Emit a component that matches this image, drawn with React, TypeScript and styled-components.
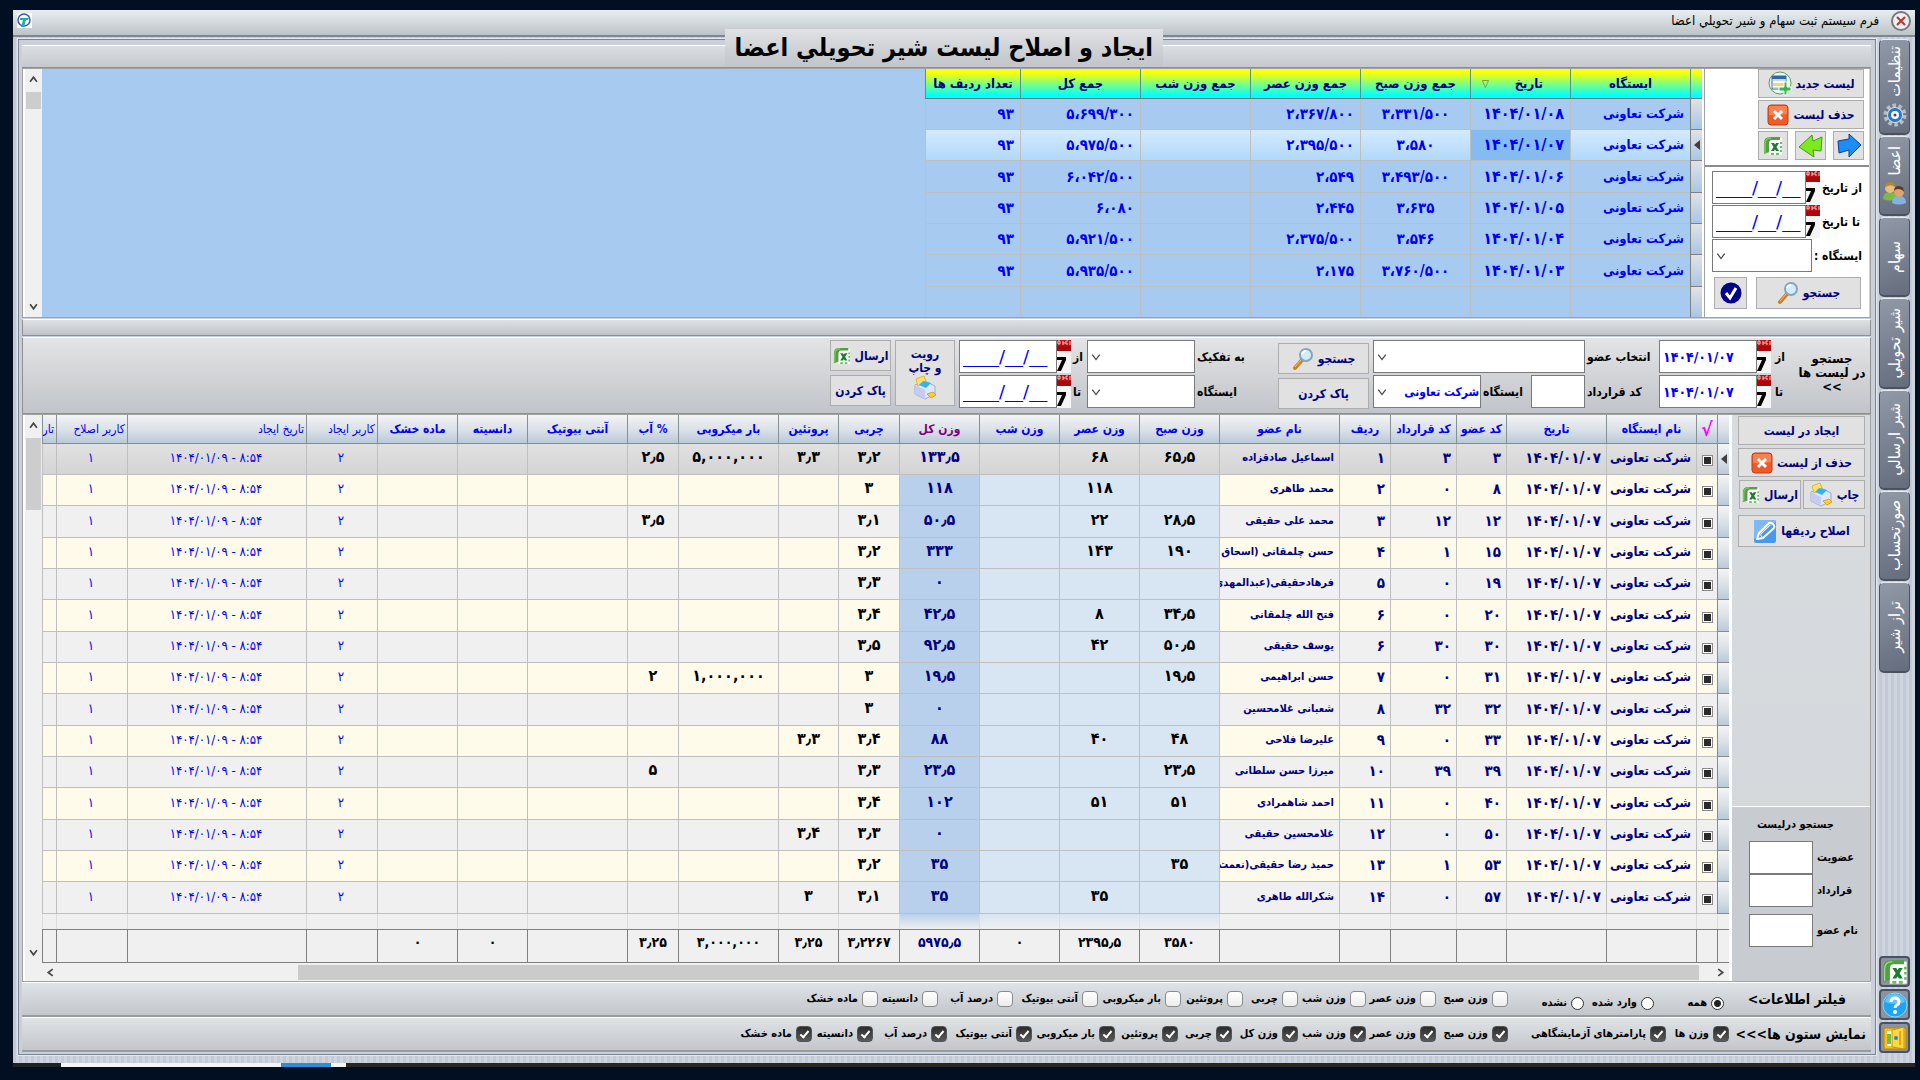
import React from "react";
import styled, { createGlobalStyle, css } from "styled-components";

const navy = "#000080";
const blue = "#0000f5";
const line = "#bfbfbf";
const steel = "linear-gradient(#f3f4f5, #d9e0e7 55%, #b9cad9)";

const GlobalStyle = createGlobalStyle`
  *, *::before, *::after { box-sizing: border-box; }
  body {
    margin: 0;
    background: #020f23;
    color: #000;
    font: bold 12px/16px "DejaVu Sans Condensed", "DejaVu Sans", sans-serif;
  }
  button, input, select { font: inherit; color: inherit; margin: 0; border-radius: 0; }
  button { cursor: pointer; }
`;

const Screen = styled.div`
  direction: rtl;
  padding: 10px 5px 0 13px;
`;

const Window = styled.main`
  background: #c8ced8;
`;

const TitleBar = styled.header`
  display: flex;
  align-items: center;
  height: 27px;
  padding: 0 3px 4px 4px;
  background: linear-gradient(#e8eff1, #bcc4c8);
  border-bottom: 2px solid #7d8793;
`;

const CloseButton = styled.button`
  width: 22px;
  height: 22px;
  padding: 0;
  border: 0;
  background: none;
  svg { display: block; }
`;

const WindowTitle = styled.h1`
  flex: 1;
  margin: 0;
  padding-right: 11px;
  font-size: 13px;
  font-weight: normal;
`;

const Frame = styled.div`
  display: flex;
  padding: 2px 5px 8px;
  background: repeating-linear-gradient(90deg, #c3cad5 0 3px, #cfd5de 3px 6px);
`;

const TabRail = styled.nav`
  display: flex;
  flex-direction: column;
  width: 34px;
  padding-left: 3px;
`;

const Tab = styled.button<{ $h: number }>`
  display: flex;
  flex-direction: column;
  align-items: center;
  justify-content: center;
  gap: 6px;
  height: ${(p) => p.$h}px;
  margin-bottom: 1px;
  padding: 0;
  border: 1px solid #4a5260;
  border-top-color: #e8ebf0;
  border-bottom-width: 2px;
  border-radius: 5px;
  background: linear-gradient(160deg, #9199a7, #656d7d);
  color: #fff;
`;

const TabText = styled.span`
  writing-mode: vertical-rl;
  transform: rotate(180deg);
  font-size: 16px;
  font-weight: normal;
  line-height: 24px;
  white-space: nowrap;
`;

const RailTools = styled.div`
  display: flex;
  flex-direction: column;
  gap: 2px;
  margin-top: auto;
  padding-bottom: 2px;
`;

const RailTool = styled.button`
  height: 31px;
  padding: 1px 0 0;
  border: 2px solid #4a5260;
  border-radius: 4px;
  background: #8b93a2;
  svg { display: block; margin: auto; }
`;

const Content = styled.div`
  flex: 1;
  min-width: 0;
  padding: 5px 4px 2px 3px;
  border: 1px solid #7b8491;
  outline: 1px solid #e4e8ee;
  background: #c9d0da;
`;

const Caption = styled.div`
  position: relative;
  height: 23px;
  border-top: 1px solid #fff;
  border-bottom: 1px solid #8d8f92;
  background: linear-gradient(#dcdfe2, #c5c8cc);
`;

const CaptionLabel = styled.h2`
  position: absolute;
  bottom: 1px;
  left: 38%;
  margin: 0;
  padding: 0 10px;
  background: linear-gradient(#e0e2e4, #c2c5c9);
  font-size: 25px;
  line-height: 37px;
  white-space: nowrap;
`;

const Bar = styled.div`
  height: 17px;
  margin: 1px 0;
  border: 1px solid #8d8f92;
  border-top-color: #fff;
  background: linear-gradient(#dfe1e3, #c0c4c8);
`;

const Section = styled.section`
  display: flex;
  border: 1px solid #a2a2a2;
  background: #fff;
`;

const SideTop = styled.aside`
  width: 166px;
  border-right: 1px solid #d0d0d0;
  border-left: 1px solid #a0a0a0;
`;

const SideButtons = styled.div`
  display: flex;
  flex-wrap: wrap;
  gap: 2px 7px;
  padding: 0 5px 5px 53px;
`;

const Button = styled.button<{ $w?: number; $h?: number }>`
  display: flex;
  align-items: center;
  justify-content: center;
  gap: 4px;
  width: ${(p) => (p.$w ? p.$w + "px" : "100%")};
  height: ${(p) => p.$h ?? 29}px;
  padding: 0 2px;
  border: 1px solid #adadad;
  background: #e1e1e1;
  color: ${navy};
  white-space: nowrap;
  svg { flex: none; }
`;

const TallButton = styled(Button)`
  flex-direction: column;
  gap: 0;
  line-height: 14px;
`;

const FilterBox = styled.form`
  display: grid;
  gap: 1px;
  padding: 4px 6px 8px 8px;
  border-top: 2px solid #8c8c8c;
`;

const Field = styled.label<{ $gap?: number }>`
  display: flex;
  align-items: center;
  gap: ${(p) => p.$gap ?? 2}px;
  white-space: nowrap;
`;

const FieldText = styled.span<{ $w?: number }>`
  ${(p) => p.$w && css`width: ${p.$w}px;`}
  text-align: left;
  white-space: nowrap;
`;

const Actions = styled.div`
  display: flex;
  justify-content: space-between;
  padding: 4px 2px 0;
`;

const DateWrap = styled.span`
  display: flex;
`;

const TextInput = styled.input<{ $w: number; $mask?: boolean }>`
  width: ${(p) => p.$w}px;
  height: 33px;
  padding: 0 3px;
  border: 1px solid #7a7a7a;
  background: #fff;
  color: ${blue};
  direction: ltr;
  font-size: 14px;
  ${(p) => p.$mask && css`
    font-family: "DejaVu Sans", sans-serif;
    font-size: 18px;
    font-weight: normal;
  `}
`;

const SelectWrap = styled.span<{ $w: number }>`
  position: relative;
  width: ${(p) => p.$w}px;
  height: 33px;
  svg { position: absolute; left: 4px; top: 12px; pointer-events: none; }
`;

const SelectBox = styled.select`
  width: 100%;
  height: 100%;
  padding: 0 1px 0 18px;
  border: 1px solid #7a7a7a;
  background: #fff;
  color: ${blue};
  appearance: none;
`;

const GridArea = styled.div<{ $bg: string }>`
  flex: 1;
  min-width: 0;
  display: flex;
  margin: 0 2px 0 2px;
  background: ${(p) => p.$bg};
`;

const GridBody = styled.div`
  flex: 1;
  min-width: 0;
  overflow: hidden;
`;

const VScroll = styled.div`
  display: flex;
  flex-direction: column;
  align-items: center;
  width: 17px;
  padding: 6px 0;
  background: #f0f0f0;
`;

const LongVScroll = styled(VScroll)`
  padding-bottom: 24px;
`;

const VThumb = styled.div<{ $h: number }>`
  width: 15px;
  height: ${(p) => p.$h}px;
  margin: 8px 0 auto;
  background: #cdcdcd;
`;

const HScroll = styled.div`
  display: flex;
  align-items: center;
  height: 18px;
  padding: 0 4px;
  background: #f0f0f0;
`;

const HThumb = styled.div`
  flex: 1;
  height: 15px;
  margin: 0 17px 0 243px;
  background: #cbcbcb;
`;

const TopTable = styled.table`
  width: 777px;
  table-layout: fixed;
  border-spacing: 0;
  color: ${blue};
  font-size: 15px;
  th {
    height: 30px;
    padding: 0 2px;
    border-left: 1px solid #5c8f8f;
    border-bottom: 1px solid #5f8080;
    background: linear-gradient(#ffff00 10%, #00ffff 92%);
    color: ${navy};
    font-size: 13px;
    white-space: nowrap;
  }
  td {
    padding: 0 6px;
    border-left: 1px solid ${line};
    border-bottom: 1px solid ${line};
    text-align: right;
    white-space: nowrap;
  }
`;

const TopRow = styled.tr<{ $on?: boolean }>`
  height: 31px;
  &:nth-child(3n) { height: 32px; }
  ${(p) => p.$on && css`td { background: linear-gradient(#d3eaff, #b2d8fa); }`}
  &:last-child { height: 30px; }
  &:last-child td { border-bottom: 0; }
`;

const TopMark = styled.td`
  && {
    padding: 0;
    background: linear-gradient(#e2e2e2, #a9c6e6);
    border-left-color: #808080;
    border-bottom-color: #808080;
    text-align: center;
  }
`;

const TopCell = styled.td<{ $mid?: boolean; $hot?: boolean; $size?: number }>`
  ${(p) => p.$mid && css`&& { text-align: center; }`}
  ${(p) => p.$hot && css`&&& { background: #84bbf0; }`}
  ${(p) => p.$size && css`font-size: ${p.$size}px;`}
`;

const SortHead = styled.span`
  display: flex;
  justify-content: space-between;
  padding: 0 25px 0 9px;
  small { color: #7a4a1a; font-size: 10px; }
`;

const SearchPanel = styled.form`
  display: flex;
  gap: 4px;
  height: 77px;
  padding: 2px 2px 0;
  border: 1px solid #8d8f92;
  border-top-color: #fff;
  background: linear-gradient(#e3e4e5, #c1c4c9);
`;

const SearchHeading = styled.strong`
  width: 72px;
  padding-top: 12px;
  font-size: 13px;
  line-height: 14px;
  text-align: center;
  white-space: pre-line;
`;

const Pair = styled.div<{ $ml?: number; $top?: number; $gap?: number }>`
  display: flex;
  flex-direction: column;
  gap: ${(p) => p.$gap ?? 2}px;
  padding-top: ${(p) => p.$top ?? 0}px;
  margin-left: ${(p) => p.$ml ?? 0}px;
`;

const FieldRow = styled.div`
  display: flex;
  justify-content: space-between;
  gap: 5px;
`;

const SideMain = styled.aside`
  display: flex;
  flex-direction: column;
  width: 139px;
  border-left: 1px solid #fff;
  background: linear-gradient(#d9dcdf, #d2d6da);
`;

const MainButtons = styled.div`
  display: flex;
  flex-wrap: wrap;
  gap: 3px 2px;
  padding: 1px 5px 0 6px;
`;

const EditSlot = styled.div`
  width: 100%;
  padding-top: 3px;
`;

const ListSearch = styled.form`
  display: grid;
  height: 175px;
  margin-top: auto;
  padding: 0 6px 34px 16px;
  align-content: end;
  border-top: 1px solid #fff;
  background: #c8ccd1;
  font-size: 11px;
`;

const ListHeading = styled.strong`
  padding: 0 30px 8px 0;
`;

const GapField = styled(Field)`
  padding-top: 7px;
`;

const MainTable = styled.table`
  width: 100%;
  table-layout: fixed;
  border-spacing: 0;
  color: ${navy};
  font-size: 15px;
`;

const HeadCell = styled.th<{ $color?: string; $thin?: boolean; $size?: number }>`
  height: 29px;
  padding: 0 2px;
  overflow: hidden;
  border-left: 1px solid #868e96;
  border-bottom: 1px solid #8a8a8a;
  background: ${steel};
  color: ${(p) => p.$color ?? blue};
  font-size: ${(p) => p.$size ?? 12}px;
  font-weight: ${(p) => (p.$thin ? "normal" : "bold")};
  text-align: ${(p) => (p.$thin ? "right" : "center")};
  white-space: nowrap;
`;

type Kind = "text" | "station" | "name" | "value" | "log" | "mark" | "check";
type Tint = "none" | "weight" | "total";
const tints: Record<Tint, string> = { none: "transparent", weight: "#d8e5f2", total: "#b8d0eb" };

const Cell = styled.td<{ $kind: Kind; $tint: Tint }>`
  padding: 0 5px 2px 3px;
  overflow: hidden;
  border-left: 1px solid ${line};
  border-bottom: 1px solid ${line};
  background-color: ${(p) => tints[p.$tint]};
  white-space: nowrap;
  text-align: ${(p) => (["text", "station", "name"].includes(p.$kind) ? "right" : "center")};
  ${(p) => p.$kind === "station" && css`font-size: 13px;`}
  ${(p) => p.$kind === "name" && css`padding-left: 0; font-size: 11px;`}
  ${(p) => p.$kind === "value" && css`
    padding: 0 0 4px;
    color: ${p.$tint === "total" ? navy : "#000"};
    font-size: 16px;
  `}
  ${(p) => p.$kind === "log" && css`color: ${blue}; font-size: 13px; font-weight: normal; direction: ltr;`}
  ${(p) => (p.$kind === "check" || p.$kind === "mark") && css`padding: 0;`}
  ${(p) => p.$kind === "mark" && css`background: ${steel}; border-color: #8a8a8a;`}
`;

const Row = styled.tr<{ $on?: boolean }>`
  height: 31px;
  background: #f0f0f0;
  &:nth-child(even) { background: #fffbeb; }
  &:nth-child(3n) { height: 32px; }
  ${(p) => p.$on && css`
    &:first-child td:not(:first-child) { background: linear-gradient(#e1e1e1, #d4d4d4); }
  `}
`;

const TailRow = styled.tr`
  height: 15px;
  background: #f0f0f0;
  td { border-bottom: 0; }
`;

const TailCell = styled.td<{ $tint: Tint }>`
  padding: 0;
  border-left: 1px solid #dcdcdc;
  background: linear-gradient(${(p) => tints[p.$tint]}, #f0f0f0);
`;

const FootCell = styled.td<{ $tint: Tint }>`
  height: 34px;
  padding: 0 0 8px;
  border-top: 1px solid #808080;
  border-left: 1px solid #808080;
  border-bottom: 1px solid #808080;
  background: #f0f0f0;
  color: ${(p) => (p.$tint === "total" ? navy : "#000")};
  font-size: 14px;
  text-align: center;
`;

const RowCheck = styled.input`
  display: block;
  width: 11px;
  height: 11px;
  margin: 3px auto 0;
  appearance: none;
  border: 1px solid #8a8a8a;
  background: #fff;
  &:checked { background: #2a2a2a; box-shadow: inset 0 0 0 1px #fff; }
`;

const OptionBar = styled.div`
  display: flex;
  align-items: center;
  height: 35px;
  padding-right: 5px;
  border-top: 1px solid #fff;
  border-bottom: 2px solid #989b9f;
  background: linear-gradient(#dfe3e6, #c3c7cb);
`;

const BarTitle = styled.strong<{ $w: number; $pad?: number }>`
  width: ${(p) => p.$w}px;
  padding-right: ${(p) => p.$pad ?? 0}px;
  font-size: 14px;
  white-space: nowrap;
`;

const Group = styled.div<{ $w: number; $drop?: boolean }>`
  display: flex;
  width: ${(p) => p.$w}px;
  ${(p) => p.$drop && css`padding-top: 8px;`}
`;

const Option = styled.label<{ $w: number }>`
  display: flex;
  align-items: center;
  gap: 4px;
  width: ${(p) => p.$w}px;
  font-size: 11px;
  white-space: nowrap;
`;

const Tick = styled.input`
  display: grid;
  place-items: center;
  flex: none;
  width: 16px;
  height: 16px;
  appearance: none;
  border: 1px solid #8b8b8b;
  background: linear-gradient(#fff, #ececec);
  && { border-radius: 4px; }
  &:checked { background: linear-gradient(#2b2b2b, #5a5a5a); border-color: #555; }
  &:checked::after {
    content: "";
    width: 5px;
    height: 9px;
    margin-bottom: 2px;
    border: solid #fff;
    border-width: 0 2px 2px 0;
    transform: rotate(40deg);
  }
`;

const Radio = styled.input`
  flex: none;
  width: 13px;
  height: 13px;
  appearance: none;
  border: 1px solid #333;
  background: #fff;
  && { border-radius: 50%; }
  &:checked { background: radial-gradient(#222 0 3px, #fff 4px); }
`;

const Desktop = styled.footer`
  display: flex;
  direction: ltr;
  height: 4px;
  background: #2c2620;
`;

const DesktopPart = styled.span<{ $w: number; $bg: string }>`
  width: ${(p) => p.$w}px;
  background: ${(p) => p.$bg};
`;

/* ---------- icons ---------- */

const XIcon = () => (
  <svg width="22" height="22" viewBox="0 0 22 22">
    <rect x="1" y="1" width="20" height="20" rx="3" fill="#ee5a28" stroke="#c23d10" />
    <path d="M2 3q0-1 2-1h14q2 0 2 1v7q-9 2-18 1z" fill="#ff9a6c" opacity=".6" />
    <path d="M7 7l8 8M15 7l-8 8" stroke="#fff" strokeWidth="3" />
  </svg>
);
const CloseIcon = () => (
  <svg width="22" height="22" viewBox="0 0 22 22">
    <circle cx="11" cy="11" r="9" fill="#eceeef" stroke="#77797b" strokeWidth="2" />
    <path d="M7 7l8 8M15 7l-8 8" stroke="#b8342c" strokeWidth="2" />
  </svg>
);
const AppIcon = () => (
  <svg width="15" height="15" viewBox="0 0 15 15">
    <rect width="15" height="15" fill="#fff" />
    <circle cx="7" cy="7" r="6" fill="none" stroke="#4b53a8" strokeWidth="1.5" />
    <path d="M3 5h9l-1 2H9l-2 7H4l2-7H3z" fill="#12b5b0" />
  </svg>
);
const NewListIcon = () => (
  <svg width="24" height="25" viewBox="0 0 24 25">
    <circle cx="12" cy="12" r="11" fill="#eef6ee" stroke="#5aa05a" />
    <path d="M4 5h14v13H4z" fill="#fff" stroke="#3d6ea8" />
    <path d="M4 5h14v3H4z" fill="#2d67ae" />
    <path d="M5 12h12v3H5z" fill="#f2d76a" />
    <path d="M5 9h12M5 17h8" stroke="#9fb8d6" />
    <path d="M16 11h3v5h4v4h-4v4h-3v-4h-5v-4h5z" fill="#39b54a" stroke="#fff" />
  </svg>
);
const ExcelIcon = ({ s = 20 }: { s?: number }) => (
  <svg width={s} height={s} viewBox="0 0 20 20">
    <path d="M6 2h13v17H6z" fill="#fff" />
    <path d="M1 18V7q0-6 6-6h10v3H9Q6 4 6 8v8z" fill="#4fa33c" />
    <path d="M2 17V8q0-6 6-6" stroke="#9ed58b" fill="none" />
    <path d="M8 7h3l5 8h-3zM13 7h3l-5 8H8z" fill="#1d7a33" />
    <path d="M18 6v2M18 10v2M18 14v2M8 18h3M13 18h3" stroke="#6cba5a" strokeWidth="2" />
  </svg>
);
const Arrow = ({ flip }: { flip?: boolean }) => (
  <svg width="26" height="25" viewBox="0 0 26 25">
    {flip ? (
      <path d="M1 14L14 2l1 6 9-4-1 14-8-1 1 7z" fill="#7bea1e" stroke="#3f9c12" />
    ) : (
      <path d="M25 12L13 1v5L2 8l1 12 10-3v7z" fill="#1b8df5" stroke="#0b3f96" />
    )}
  </svg>
);
const CalendarIcon = () => (
  <svg width="14" height="33" viewBox="0 0 14 33">
    <path d="M0 0h14v33H0z" fill="#f4f4f4" />
    <path d="M0 0h14v11H0z" fill="#c00d12" />
    <path d="M0 6h14v5H0z" fill="#a8080c" />
    <path d="M1 1v3h2V1zM6 1v4M6 3h2M11 1H9v3h2M13 1v4" stroke="#f6c8c8" fill="none" />
    <path d="M0 17h9v3L4 31H0l5-11H0z" fill="#000" />
  </svg>
);
const SearchIcon = () => (
  <svg width="22" height="24" viewBox="0 0 22 24">
    <path d="M3 21l7-8" stroke="#c9802b" strokeWidth="4" strokeLinecap="round" />
    <path d="M3 20l6-7" stroke="#f3c07a" strokeWidth="1" />
    <circle cx="14" cy="8" r="6" fill="#d3ecfb" stroke="#86a4bd" strokeWidth="2" />
    <path d="M10 7q1-3 4-3" stroke="#fff" strokeWidth="2" fill="none" />
  </svg>
);
const OkIcon = () => (
  <svg width="22" height="22" viewBox="0 0 22 22">
    <circle cx="11" cy="11" r="10.5" fill="#04048a" />
    <path d="M6 11l4 5 6-10" stroke="#fff" strokeWidth="3" fill="none" />
  </svg>
);
const PrintIcon = () => (
  <svg width="24" height="25" viewBox="0 0 24 25">
    <path d="M2 10l10-4 10 5v8l-10 5L2 19z" fill="#dfe6fb" stroke="#98a8dc" />
    <path d="M2 10l10 5v9L2 19z" fill="#c3cdf4" />
    <path d="M3 4l8-3 2 5-8 5z" fill="#fbe36b" stroke="#e0b830" />
    <path d="M10 6l8 2-5 5-7-3z" fill="#35b4e8" />
    <path d="M14 19l6-2 3 3-5 3z" fill="#f9cf3a" stroke="#d9a516" />
  </svg>
);
const PencilIcon = () => (
  <svg width="24" height="25" viewBox="0 0 24 25">
    <rect x="1" y="1" width="22" height="23" rx="2" fill="#4a98ea" />
    <path d="M1 3q0-2 2-2h18q2 0 2 2L1 20z" fill="#7fb9f3" />
    <path d="M4 20l2-6L16 4q2-1 4 1t1 4L10 19z" fill="none" stroke="#fff" strokeWidth="2" />
    <path d="M6 14l4 5M8 15l9-9" stroke="#fff" />
  </svg>
);
const GearIcon = () => (
  <svg width="24" height="24" viewBox="0 0 24 24">
    <circle cx="12" cy="12" r="9.5" fill="none" stroke="#b9bec6" strokeWidth="4" strokeDasharray="3.5 2.5" />
    <circle cx="12" cy="12" r="8" fill="#d9dce0" />
    <circle cx="12" cy="12" r="5.5" fill="#fff" stroke="#2176cf" strokeWidth="3" />
    <circle cx="12" cy="12" r="1.5" fill="#444" />
  </svg>
);
const PeopleIcon = () => (
  <svg width="25" height="24" viewBox="0 0 25 24">
    <path d="M1 18q0-7 7-7t7 7q-7 3-14 0z" fill="#7fb84a" />
    <circle cx="8" cy="7" r="5" fill="#e8bd85" />
    <path d="M3 7q0-6 5-6t5 5q-4-3-7-1-2 0-3 2z" fill="#b5852a" />
    <path d="M10 22q0-7 7-7t7 7q-7 3-14 0z" fill="#7fb3e6" />
    <circle cx="17" cy="11" r="5" fill="#dba571" />
    <path d="M12 10q0-5 5-5t5 6q-2-3-6-3-3 0-4 2z" fill="#5d3b1f" />
  </svg>
);
const HelpIcon = () => (
  <svg width="26" height="26" viewBox="0 0 26 26">
    <circle cx="13" cy="13" r="12" fill="#1ea4f2" stroke="#8ed4fb" />
    <path d="M3 10q2-8 10-8t10 8q-10 4-20 0z" fill="#7fd0fb" opacity=".7" />
    <path d="M9 10q0-4 4-4t4 4q0 2-2 3t-2 3" stroke="#fff" strokeWidth="3" fill="none" />
    <circle cx="13" cy="20" r="2" fill="#fff" />
  </svg>
);
const DoorIcon = () => (
  <svg width="26" height="26" viewBox="0 0 26 26">
    <path d="M2 3h22v21H2z" fill="#f6c21c" stroke="#b98509" />
    <path d="M5 6h7v15H5z" fill="#fff" />
    <path d="M5 9h4v10H5z" fill="#6fc04a" />
    <path d="M10 5l12-3v22l-12-2z" fill="#ffd83e" stroke="#c4900c" />
    <circle cx="14" cy="13" r="2" fill="#2b7fd6" />
    <path d="M18 6v14" stroke="#e0a818" strokeWidth="2" />
  </svg>
);
const Chevron = ({ dir, s = 9 }: { dir: "up" | "down" | "left" | "right"; s?: number }) => {
  const d = { up: "M1 6l3-4 3 4", down: "M1 2l3 4 3-4", left: "M6 1L2 4l4 3", right: "M2 1l4 3-4 3" }[dir];
  return (
    <svg width={s} height={s} viewBox="0 0 8 8">
      <path d={d} fill="none" stroke="#454545" strokeWidth={s > 9 ? 1 : 1.5} />
    </svg>
  );
};
const RowArrow = () => (
  <svg width="6" height="10" viewBox="0 0 6 10"><path d="M6 0v10L0 5z" fill="#404040" /></svg>
);

/* ---------- small composites ---------- */

const blankDate = "____/__/__";

const DateField = ({ label, w, value = blankDate, text, gap }: { label: string; w: number; value?: string; text?: number; gap?: number }) => (
  <Field $gap={gap}>
    <FieldText $w={text}>{label}</FieldText>
    <DateWrap>
      <CalendarIcon />
      <TextInput $w={w} $mask={value === blankDate} defaultValue={value} />
    </DateWrap>
  </Field>
);

const Select = ({ w, value = "" }: { w: number; value?: string }) => (
  <SelectWrap $w={w}>
    <SelectBox defaultValue={value}><option>{value}</option></SelectBox>
    <Chevron dir="down" s={10} />
  </SelectWrap>
);

const topRows = [
  ["۱۴۰۴/۰۱/۰۸", "۳،۳۳۱/۵۰۰", "۲،۳۶۷/۸۰۰", "۵،۶۹۹/۳۰۰"],
  ["۱۴۰۴/۰۱/۰۷", "۳،۵۸۰", "۲،۳۹۵/۵۰۰", "۵،۹۷۵/۵۰۰"],
  ["۱۴۰۴/۰۱/۰۶", "۳،۴۹۳/۵۰۰", "۲،۵۴۹", "۶،۰۴۲/۵۰۰"],
  ["۱۴۰۴/۰۱/۰۵", "۳،۶۳۵", "۲،۴۴۵", "۶،۰۸۰"],
  ["۱۴۰۴/۰۱/۰۴", "۳،۵۴۶", "۲،۳۷۵/۵۰۰", "۵،۹۲۱/۵۰۰"],
  ["۱۴۰۴/۰۱/۰۳", "۳،۷۶۰/۵۰۰", "۲،۱۷۵", "۵،۹۳۵/۵۰۰"],
];

type Col = { head: string; w?: number; kind: Kind; tint?: Tint; thin?: boolean; color?: string; foot?: string; size?: number };
const cols: Col[] = [
  { head: "", w: 12, kind: "mark" },
  { head: "√", w: 21, kind: "check", color: "#ff00ff", size: 19 },
  { head: "نام ایستگاه", w: 90, kind: "station" },
  { head: "تاریخ", w: 100, kind: "text" },
  { head: "کد عضو", w: 50, kind: "text" },
  { head: "کد قرارداد", w: 66, kind: "text" },
  { head: "ردیف", w: 51, kind: "text" },
  { head: "نام عضو", w: 120, kind: "name" },
  { head: "وزن صبح", w: 80, kind: "value", tint: "weight", foot: "۳۵۸۰" },
  { head: "وزن عصر", w: 80, kind: "value", tint: "weight", foot: "۲۳۹۵٫۵" },
  { head: "وزن شب", w: 80, kind: "value", tint: "weight", foot: "۰" },
  { head: "وزن کل", w: 80, kind: "value", tint: "total", color: "#800080", foot: "۵۹۷۵٫۵" },
  { head: "چربی", w: 61, kind: "value", foot: "۳٫۲۲۶۷" },
  { head: "پروتئین", w: 60, kind: "value", foot: "۳٫۲۵" },
  { head: "بار میکروبی", w: 100, kind: "value", foot: "۳,۰۰۰,۰۰۰" },
  { head: "% آب", w: 51, kind: "value", foot: "۳٫۲۵" },
  { head: "آنتی بیوتیک", w: 100, kind: "value" },
  { head: "دانسیته", w: 70, kind: "value", foot: "۰" },
  { head: "ماده خشک", w: 80, kind: "value", foot: "۰" },
  { head: "کاربر ایجاد", w: 71, kind: "log", thin: true },
  { head: "تاریخ ایجاد", w: 179, kind: "log", thin: true },
  { head: "کاربر اصلاح", w: 71, kind: "log", thin: true },
  { head: "تاریخ اصلاح", kind: "log", thin: true },
];

// code, contract, row, name, morning, evening, total, fat, protein, microbial load, water
const members: string[][] = [
  ["۳", "۳", "۱", "اسماعیل صادقزاده", "۶۵٫۵", "۶۸", "۱۳۳٫۵", "۳٫۲", "۳٫۳", "۵,۰۰۰,۰۰۰", "۲٫۵"],
  ["۸", "۰", "۲", "محمد طاهری", "", "۱۱۸", "۱۱۸", "۳", "", "", ""],
  ["۱۲", "۱۲", "۳", "محمد علی حقیقی", "۲۸٫۵", "۲۲", "۵۰٫۵", "۳٫۱", "", "", "۳٫۵"],
  ["۱۵", "۱", "۴", "حسن چلمقانی (اسحاق", "۱۹۰", "۱۴۳", "۳۳۳", "۳٫۲", "", "", ""],
  ["۱۹", "۰", "۵", "فرهادحقیقی(عبدالمهدی", "", "", "۰", "۳٫۳", "", "", ""],
  ["۲۰", "۰", "۶", "فتح الله  چلمقانی", "۳۴٫۵", "۸", "۴۲٫۵", "۳٫۴", "", "", ""],
  ["۳۰", "۳۰", "۶", "یوسف حقیقی", "۵۰٫۵", "۴۲", "۹۲٫۵", "۳٫۵", "", "", ""],
  ["۳۱", "۰", "۷", "حسن ابراهیمی", "۱۹٫۵", "", "۱۹٫۵", "۳", "", "۱,۰۰۰,۰۰۰", "۲"],
  ["۳۲", "۳۲", "۸", "شعبانی غلامحسین", "", "", "۰", "۳", "", "", ""],
  ["۳۳", "۰", "۹", "علیرضا فلاحی", "۴۸", "۴۰", "۸۸", "۳٫۴", "۳٫۳", "", ""],
  ["۳۹", "۳۹", "۱۰", "میرزا حسن سلطانی", "۲۳٫۵", "", "۲۳٫۵", "۳٫۳", "", "", "۵"],
  ["۴۰", "۰", "۱۱", "احمد شاهمرادی", "۵۱", "۵۱", "۱۰۲", "۳٫۴", "", "", ""],
  ["۵۰", "۰", "۱۲", "غلامحسین حقیقی", "", "", "۰", "۳٫۳", "۳٫۴", "", ""],
  ["۵۳", "۱", "۱۳", "حمید رضا حقیقی(نعمت", "۳۵", "", "۳۵", "۳٫۲", "", "", ""],
  ["۵۷", "۰", "۱۴", "شکرالله طاهری", "", "۳۵", "۳۵", "۳٫۱", "۳", "", ""],
];

const cellsOf = (m: string[]) => [
  "", "", "شرکت تعاونی", "۱۴۰۴/۰۱/۰۷", m[0], m[1], m[2], m[3], m[4], m[5], "", m[6], m[7], m[8], m[9], m[10],
  "", "", "", "۲", "۱۴۰۴/۰۱/۰۹ - ۸:۵۴", "۱", "",
];

const tabs: [string, number, React.ReactNode?][] = [
  ["تنظیمات", 96, <GearIcon />],
  ["اعضا", 80, <PeopleIcon />],
  ["سهام", 80],
  ["شیر تحویلي", 91],
  ["شیر ارسالي", 100],
  ["صورتحساب", 90],
  ["تراز شیر", 91],
];

const filters: [string, number][] = [
  ["وزن صبح", 72], ["وزن عصر", 70], ["وزن شب", 68], ["چربی", 55], ["پروتئین", 62],
  ["بار میکروبی", 83], ["آنتی بیوتیک", 85], ["درصد آب", 75], ["دانسیته", 60], ["ماده خشک", 76],
];
const shown: [string, number][] = [
  ["وزن صبح", 72], ["وزن عصر", 70], ["وزن شب", 68], ["وزن کل", 66], ["چربی", 54], ["پروتئین", 63],
  ["بار میکروبی", 83], ["آنتی بیوتیک", 85], ["درصد آب", 74], ["دانسیته", 61], ["ماده خشک", 76],
];

const TopGrid = () => (
  <GridArea $bg="#a6caf0">
    <GridBody>
      <TopTable>
        <colgroup>
          {[12, 120, 100, 110, 110, 110, 120, 95].map((w, i) => <col key={i} width={w} />)}
        </colgroup>
        <thead>
          <tr>
            <th />
            <th>ایستگاه</th>
            <th><SortHead>تاریخ<small>▽</small></SortHead></th>
            <th>جمع وزن صبح</th>
            <th>جمع وزن عصر</th>
            <th>جمع وزن شب</th>
            <th>جمع کل</th>
            <th>تعداد ردیف ها</th>
          </tr>
        </thead>
        <tbody>
          {topRows.map((r, i) => (
            <TopRow key={r[0]} $on={i === 1}>
              <TopMark>{i === 1 && <RowArrow />}</TopMark>
              <TopCell $size={13}>شرکت تعاونی</TopCell>
              <TopCell $hot={i === 1} $size={16}>{r[0]}</TopCell>
              <TopCell $mid>{r[1]}</TopCell>
              <TopCell>{r[2]}</TopCell>
              <TopCell />
              <TopCell>{r[3]}</TopCell>
              <TopCell>۹۳</TopCell>
            </TopRow>
          ))}
          <TopRow>
            <TopMark />
            {[0, 1, 2, 3, 4, 5, 6].map((i) => <TopCell key={i} />)}
          </TopRow>
        </tbody>
      </TopTable>
    </GridBody>
    <VScroll>
      <Chevron dir="up" />
      <VThumb $h={17} />
      <Chevron dir="down" />
    </VScroll>
  </GridArea>
);

const MainGrid = () => (
  <GridArea $bg="#f0f0f0">
    <GridBody>
      <MainTable>
        <colgroup>{cols.map((c, i) => <col key={i} width={c.w} />)}</colgroup>
        <thead>
          <tr>
            {cols.map((c, i) => (
              <HeadCell key={i} $color={c.color} $thin={c.thin} $size={c.size}>{c.head}</HeadCell>
            ))}
          </tr>
        </thead>
        <tbody>
          {members.map((m, r) => (
            <Row key={r} $on={r === 0}>
              {cellsOf(m).map((v, i) => (
                <Cell key={i} $kind={cols[i].kind} $tint={cols[i].tint ?? "none"}>
                  {i === 0 && r === 0 ? <RowArrow /> : i === 1 ? <RowCheck type="checkbox" defaultChecked aria-label={m[3]} /> : v}
                </Cell>
              ))}
            </Row>
          ))}
          <TailRow>{cols.map((c, i) => <TailCell key={i} $tint={c.tint ?? "none"} />)}</TailRow>
        </tbody>
        <tfoot>
          <tr>{cols.map((c, i) => <FootCell key={i} $tint={c.tint ?? "none"}>{c.foot}</FootCell>)}</tr>
        </tfoot>
      </MainTable>
      <HScroll>
        <Chevron dir="right" />
        <HThumb />
        <Chevron dir="left" />
      </HScroll>
    </GridBody>
    <LongVScroll>
      <Chevron dir="up" />
      <VThumb $h={72} />
      <Chevron dir="down" />
    </LongVScroll>
  </GridArea>
);

export default function App() {
  return (
    <Screen lang="fa">
      <GlobalStyle />
      <Window>
        <TitleBar>
          <CloseButton aria-label="بستن"><CloseIcon /></CloseButton>
          <WindowTitle>فرم سیستم ثبت سهام و شیر تحویلي اعضا</WindowTitle>
          <AppIcon />
        </TitleBar>
        <Frame>
          <TabRail>
            {tabs.map(([t, h, icon]) => (
              <Tab key={t} $h={h}><TabText>{t}</TabText>{icon}</Tab>
            ))}
            <RailTools>
              <RailTool aria-label="اکسل"><ExcelIcon s={26} /></RailTool>
              <RailTool aria-label="راهنما"><HelpIcon /></RailTool>
              <RailTool aria-label="خروج"><DoorIcon /></RailTool>
            </RailTools>
          </TabRail>
          <Content>
            <Caption><CaptionLabel>ایجاد و اصلاح لیست شیر تحویلي اعضا</CaptionLabel></Caption>
            <Section>
              <SideTop>
                <SideButtons>
                  <Button>لیست جدید<NewListIcon /></Button>
                  <Button>حذف لیست<XIcon /></Button>
                  <Button $w={31} aria-label="بعدی"><Arrow /></Button>
                  <Button $w={31} aria-label="قبلی"><Arrow flip /></Button>
                  <Button $w={30} aria-label="اکسل"><ExcelIcon /></Button>
                </SideButtons>
                <FilterBox>
                  <DateField label="از تاریخ" w={94} text={41} gap={2} />
                  <DateField label="تا تاریخ" w={94} text={41} gap={2} />
                  <Field>
                    <FieldText $w={49}>ایستگاه :</FieldText>
                    <Select w={100} />
                  </Field>
                  <Actions>
                    <Button type="button" $w={105} $h={32}>جستجو<SearchIcon /></Button>
                    <Button type="button" $w={33} $h={32} aria-label="تایید"><OkIcon /></Button>
                  </Actions>
                </FilterBox>
              </SideTop>
              <TopGrid />
            </Section>
            <Bar />
            <SearchPanel>
              <SearchHeading>{"جستجو\nدر لیست ها\n>>"}</SearchHeading>
              <Pair>
                <DateField label="از" w={98} value="۱۴۰۴/۰۱/۰۷" text={17} gap={4} />
                <DateField label="تا" w={98} value="۱۴۰۴/۰۱/۰۷" text={17} gap={4} />
              </Pair>
              <Pair>
                <Field>
                  <FieldText $w={68}>انتخاب عضو</FieldText>
                  <Select w={212} />
                </Field>
                <FieldRow>
                  <Field>
                    <FieldText $w={68}>کد قرارداد</FieldText>
                    <TextInput $w={54} />
                  </Field>
                  <Field>
                    <FieldText>ایستگاه</FieldText>
                    <Select w={108} value="شرکت تعاونی" />
                  </Field>
                </FieldRow>
              </Pair>
              <Pair $ml={26} $top={3} $gap={4}>
                <Button type="button" $w={91} $h={31}>جستجو<SearchIcon /></Button>
                <Button type="button" $w={91} $h={31}>پاک کردن</Button>
              </Pair>
              <Pair>
                <Field>
                  <FieldText $w={51}>به تفکیک</FieldText>
                  <Select w={108} />
                </Field>
                <Field>
                  <FieldText $w={51}>ایستگاه</FieldText>
                  <Select w={108} />
                </Field>
              </Pair>
              <Pair>
                <DateField label="از" w={98} text={10} gap={2} />
                <DateField label="تا" w={98} text={10} gap={2} />
              </Pair>
              <TallButton type="button" $w={60} $h={66}>
                <span>رویت</span>
                <span>و چاپ</span>
                <PrintIcon />
              </TallButton>
              <Pair $gap={4}>
                <Button type="button" $w={61} $h={31}>ارسال<ExcelIcon s={18} /></Button>
                <Button type="button" $w={61} $h={31}>پاک کردن</Button>
              </Pair>
            </SearchPanel>
            <Section>
              <SideMain>
                <MainButtons>
                  <Button>ایجاد در لیست</Button>
                  <Button>حذف از لیست<XIcon /></Button>
                  <Button $w={62}>چاپ<PrintIcon /></Button>
                  <Button $w={62}>ارسال<ExcelIcon s={18} /></Button>
                  <EditSlot><Button $h={32}>اصلاح ردیفها<PencilIcon /></Button></EditSlot>
                </MainButtons>
                <ListSearch>
                  <ListHeading>جستجو درلیست</ListHeading>
                  <Field $gap={4}><FieldText $w={47}>عضویت</FieldText><TextInput $w={64} /></Field>
                  <Field $gap={4}><FieldText $w={47}>قرارداد</FieldText><TextInput $w={64} /></Field>
                  <GapField $gap={4}><FieldText $w={47}>نام عضو</FieldText><TextInput $w={64} /></GapField>
                </ListSearch>
              </SideMain>
              <MainGrid />
            </Section>
            <OptionBar>
              <BarTitle $w={142} $pad={20}>{"فیلتر اطلاعات>"}</BarTitle>
              <Group $w={216} $drop>
                <Option $w={70}><Radio type="radio" name="state" defaultChecked />همه</Option>
                <Option $w={70}><Radio type="radio" name="state" />وارد شده</Option>
                <Option $w={60}><Radio type="radio" name="state" />نشده</Option>
              </Group>
              {filters.map(([t, w]) => <Option key={t} $w={w}><Tick type="checkbox" />{t}</Option>)}
            </OptionBar>
            <OptionBar>
              <BarTitle $w={137}>{"نمایش ستون ها>>>"}</BarTitle>
              <Group $w={221}>
                <Option $w={63}><Tick type="checkbox" defaultChecked />وزن ها</Option>
                <Option $w={150}><Tick type="checkbox" defaultChecked />پارامترهای آزمایشگاهی</Option>
              </Group>
              {shown.map(([t, w]) => <Option key={t} $w={w}><Tick type="checkbox" defaultChecked />{t}</Option>)}
            </OptionBar>
          </Content>
        </Frame>
      </Window>
      <Desktop>
        <DesktopPart $w={48} $bg="#1c2326" />
        <DesktopPart $w={220} $bg="#f4f4f4" />
        <DesktopPart $w={50} $bg="#2b8fd6" />
        <DesktopPart $w={15} $bg="#f4f4f4" />
      </Desktop>
    </Screen>
  );
}
